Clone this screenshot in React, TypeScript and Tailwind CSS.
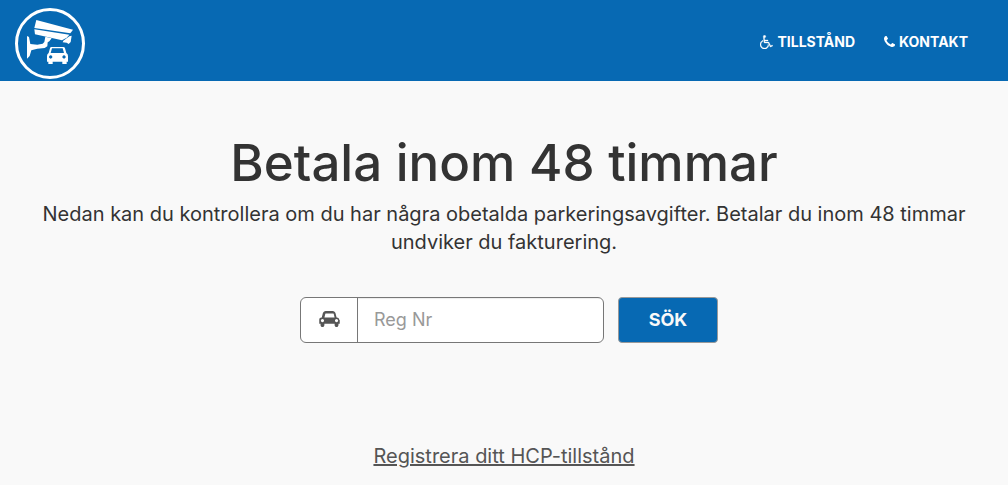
import React from "react";

function Logo() {
  return (
    <svg viewBox="45 24 210 213" className="h-[71px] w-[70px]" aria-hidden="true">
      <ellipse cx="150" cy="130.5" rx="100.5" ry="102" fill="none" stroke="#fff" strokeWidth="9" />
      <g fill="#fff">
        <path d="M109 60 L219 89 L211 100 L103 84 Z" />
        <path d="M103 88 L208 104 L200 113 L186 121 L105 103 Z" />
        <path d="M190 122 L208 109 L215 107 L212 126 L206 132 L200 128 L188 127 Z" />
        <path d="M136 110 L155 115 L148 124 L143 127 L142 139 L134 144 L112 146 L94 151 L89 168 L81 176 L81 108 L87 111 L91 132 L112 134 L128 131 L133 126 Z" />
        <path
          fillRule="evenodd"
          d="M154 141 h36 q4 0 5 4 l4 14 q5 3 5 9 v17 h-4 v7 h-13 v-7 h-29 v7 h-13 v-7 h-4 v-17 q0-6 5-9 l4-14 q1-4 4-4 z M156 145 l-4 14 h40 l-4-14 z M152 166 a5 5 0 1 0 .1 0 z M192 166 a5 5 0 1 0 .1 0 z"
        />
      </g>
    </svg>
  );
}

function WheelchairIcon() {
  return (
    <svg viewBox="0 0 1664 1792" className="h-[14px] w-[13px]" fill="currentColor" aria-hidden="true">
      <path d="M1023 1187l102 204q-58 179-210 290t-339 111q-156 0-288.5-77.5t-210-210-77.5-288.5q0-181 104.5-330t274.5-211l17 131q-122 54-195 165.5t-73 244.5q0 185 131.5 316.5t316.5 131.5q126 0 232.5-65t165-175.5 49.5-236.5zM1571 1287l58 114-256 128q-13 7-29 7-40 0-57-35l-239-477h-472q-24 0-42.5-16.5t-21.5-40.5l-96-779q-2-16 6-42 14-51 57-82.5t97-31.5q66 0 113 47t47 113q0 69-52 117.5t-120 41.5l37 289h423v128h-407l16 128h455q40 0 57 35l228 455z" stroke="currentColor" strokeWidth="40" />
    </svg>
  );
}

function PhoneIcon() {
  return (
    <svg viewBox="0 0 1408 1408" className="size-[11px]" fill="currentColor" aria-hidden="true">
      <path d="M1408 1112q0 27-10 70.5t-21 68.5q-21 50-122 106-94 51-186 51-27 0-53-3.5t-57.5-12.5-47-14.5-55.5-20.5-49-18q-98-35-175-83-127-79-264-216t-216-264q-48-77-83-175-3-9-18-49t-20.5-55.5-14.5-47-12.5-57.5-3.5-53q0-92 51-186 56-101 106-122 25-11 68.5-21t70.5-10q14 0 21 3 18 6 53 76 11 19 30 54t35 63.5 31 53.5q3 4 17.5 25t21.5 35.5 7 28.5q0 20-28.5 50t-62 55-62 53-28.5 46q0 9 5 22.5t8.5 20.5 14 24 11.5 19q76 137 174 235t235 174q2 1 19 11.5t24 14 20.5 8.5 22.5 5q18 0 46-28.5t53-62 55-62 50-28.5q14 0 28.5 7t35.5 21.5 25 17.5q25 15 53.5 31t63.5 35 54 30q70 35 76 53 3 7 3 21z" />
    </svg>
  );
}

function CarIcon() {
  return (
    <svg viewBox="0 128 2048 1600" className="h-4 w-[21px]" fill="currentColor" aria-hidden="true">
      <path d="M480 1088q0-66-47-113t-113-47-113 47-47 113 47 113 113 47 113-47 47-113zm36-320h1016l-89-357q-2-8-14-17.5t-21-9.5h-768q-9 0-21 9.5t-14 17.5zm1372 320q0-66-47-113t-113-47-113 47-47 113 47 113 113 47 113-47 47-113zm160-96v384q0 14-9 23t-23 9h-96v128q0 80-56 136t-136 56-136-56-56-136v-128h-1024v128q0 80-56 136t-136 56-136-56-56-136v-128h-96q-14 0-23-9t-9-23v-384q0-93 65.5-158.5t158.5-65.5h28l105-419q23-94 104-157.5t179-63.5h704q98 0 179 63.5t104 157.5l105 419h28q93 0 158.5 65.5t65.5 158.5z" />
    </svg>
  );
}

export default function App() {
  return (
    <div className="min-h-screen bg-[#f9f9f9] font-['Inter',sans-serif] text-[#333]">
      <header className="flex h-[81px] items-center justify-between bg-[#0769b3] pr-10 pl-[15px] text-white">
        <a href="#" aria-label="Start" className="pt-1.5">
          <Logo />
        </a>
        <nav className="flex gap-[29px] pt-0.5 text-[14px] leading-5 font-bold">
          <a href="#tillstand" className="flex items-center gap-1">
            <WheelchairIcon />
            TILLSTÅND
          </a>
          <a href="#kontakt" className="flex items-center gap-1">
            <PhoneIcon />
            KONTAKT
          </a>
        </nav>
      </header>
      <main className="flex flex-col items-center px-6 pt-[54px] pb-4 text-center">
        <h1 className="text-[51px] leading-[56px] font-medium">Betala inom 48 timmar</h1>
        <p className="mt-[9px] text-[20px] leading-7">
          Nedan kan du kontrollera om du har några obetalda parkeringsavgifter. Betalar du inom 48 timmar undviker du
          fakturering.
        </p>
        <form className="mt-[41px] flex gap-[14px] pl-[10px]" onSubmit={(e) => e.preventDefault()}>
          <div className="flex h-[46px] w-[304px] overflow-hidden rounded-md border border-[#777] bg-white">
            <label htmlFor="reg" aria-label="Reg Nr" className="flex w-[57px] items-center justify-center border-r border-[#777] pb-0.5 text-[#555]">
              <CarIcon />
            </label>
            <input
              id="reg"
              type="text"
              placeholder="Reg Nr"
              className="min-w-0 flex-1 px-4 pb-0.5 text-[18px] text-[#555] shadow-[inset_0_1px_1px_rgba(0,0,0,0.075)] outline-none placeholder:text-[#999]"
            />
          </div>
          <button type="submit" className="h-[46px] w-[100px] rounded-[4px] border border-[#999] bg-[#0769b3] pb-0.5 text-[18px] font-bold text-[#f9f9f9]">
            SÖK
          </button>
        </form>
        <a href="#hcp" className="mt-[99px] text-[20px] leading-7 text-[#555] underline">
          Registrera ditt HCP-tillstånd
        </a>
      </main>
    </div>
  );
}
